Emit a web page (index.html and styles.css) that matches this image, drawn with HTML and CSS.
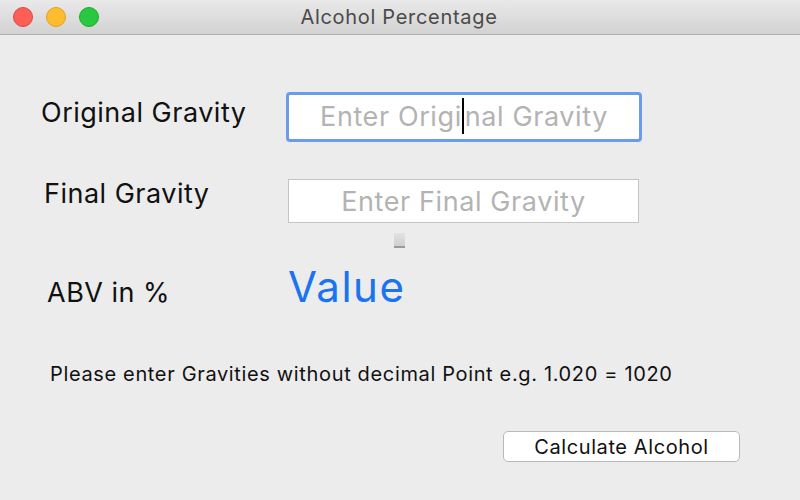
FILE: index.html
```html
<!DOCTYPE html>
<html lang="en">
<head>
    <meta charset="UTF-8">
    <meta name="viewport" content="width=device-width, initial-scale=1.0">
    <title>Alcohol Percentage</title>
    <link rel="stylesheet" href="styles.css">
</head>
<body>
    <div class="window">
        <!-- Barra de título -->
        <div class="titlebar">
            <div class="lights">
                <span class="light close"></span>
                <span class="light minimize"></span>
                <span class="light zoom"></span>
            </div>
            <div class="title">Alcohol Percentage</div>
        </div>

        <div class="content">
            <div class="row row-og">
                <label class="label">Original Gravity</label>
                <div class="field focused">
                    <span class="placeholder">Enter Origi<span class="caret"></span>nal Gravity</span>
                </div>
            </div>

            <div class="row row-fg">
                <label class="label">Final Gravity</label>
                <div class="field">
                    <span class="placeholder">Enter Final Gravity</span>
                </div>
            </div>

            <div class="stub-row">
                <span class="stub"></span>
            </div>

            <div class="row row-abv">
                <label class="label">ABV in %</label>
                <div class="value">Value</div>
            </div>

            <p class="hint">Please enter Gravities without decimal Point e.g. 1.020 = 1020</p>

            <div class="actions">
                <button class="btn">Calculate Alcohol</button>
            </div>
        </div>
    </div>
</body>
</html>
```

FILE: styles.css
```css
body {
    margin: 0;
    background: #ececec;
    font-family: Inter, "Liberation Sans", sans-serif;
}

.window {
    width: 800px;
    height: 500px;
    background: #ececec;
    overflow: hidden;
}

.titlebar {
    position: relative;
    height: 34px;
    background: linear-gradient(#e9e9e9, #d2d2d2);
    border-bottom: 1px solid #b1b1b1;
    display: flex;
    align-items: center;
    justify-content: center;
}

.lights {
    position: absolute;
    left: 13px;
    top: 7px;
    display: flex;
    gap: 13px;
}

.light {
    width: 20px;
    height: 20px;
    border-radius: 50%;
    box-sizing: border-box;
}

.close {
    background: #fd5f57;
    border: 1px solid #e0443e;
}

.minimize {
    background: #febc2e;
    border: 1px solid #dea123;
}

.zoom {
    background: #28c840;
    border: 1px solid #1aab29;
}

.title {
    font-size: 20px;
    letter-spacing: 0.7px;
    color: #4a4a4a;
    margin-left: -2px;
}

.content {
    padding-top: 57px;
}

.row {
    display: flex;
    align-items: center;
}

.label {
    font-size: 27px;
    letter-spacing: 0.5px;
    color: #111;
}

.row-og {
    height: 50px;
    padding-left: 41px;
}

.row-og .label {
    width: 245px;
    margin-bottom: 10px;
}

.row-fg {
    height: 44px;
    margin-top: 37px;
    padding-left: 44px;
}

.row-fg .label {
    width: 244px;
    margin-bottom: 16px;
}

.field {
    width: 351px;
    height: 44px;
    box-sizing: border-box;
    background: #fff;
    border: 1px solid #c4c4c4;
    display: flex;
    align-items: center;
    justify-content: center;
}

.field.focused {
    width: 356px;
    height: 50px;
    border: 3px solid #6a9cec;
    border-radius: 4px;
}

.placeholder {
    font-size: 27px;
    letter-spacing: 0.6px;
    color: #b3b3b3;
}

.focused .placeholder {
    margin-bottom: 3px;
}

.caret {
    display: inline-block;
    width: 2px;
    height: 36px;
    background: #000;
    vertical-align: -8px;
    margin-right: 1px;
}

.stub-row {
    padding-left: 394px;
    margin-top: 10px;
    height: 15px;
}

.stub {
    display: block;
    width: 11px;
    height: 15px;
    background: linear-gradient(#e2e2e2, #cfcfcf);
    border-bottom: 2px solid #9a9a9a;
    box-sizing: border-box;
}

.row-abv {
    margin-top: 9px;
    height: 54px;
    padding-left: 47px;
    align-items: flex-end;
}

.row-abv .label {
    width: 242px;
    padding-bottom: 2px;
}

.value {
    font-size: 42px;
    letter-spacing: 1.5px;
    color: #1a73f0;
    line-height: 1;
    padding-bottom: 3px;
    margin-left: -1px;
}

.hint {
    margin: 51px 0 0 50px;
    font-size: 20px;
    letter-spacing: 0.65px;
    color: #111;
}

.actions {
    padding-left: 503px;
    margin-top: 45px;
}

.btn {
    width: 237px;
    height: 31px;
    background: #fff;
    border: 1px solid #b9b9b9;
    border-radius: 5px;
    font-family: Inter, "Liberation Sans", sans-serif;
    font-size: 20px;
    letter-spacing: 0.6px;
    color: #111;
    padding: 0;
}
```
